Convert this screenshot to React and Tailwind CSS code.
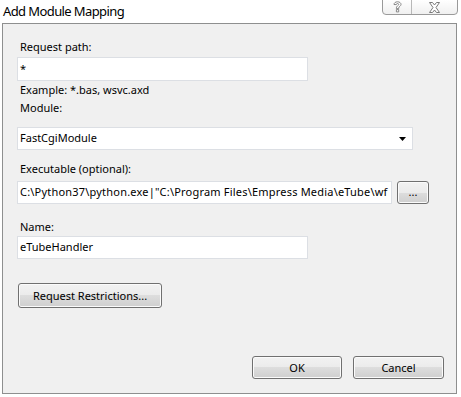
import React from "react";

const btn =
  "h-[23px] rounded-[3px] border border-[#707070] bg-[linear-gradient(#f2f2f2_0%,#ebebeb_50%,#dddddd_50%,#cfcfcf_100%)] shadow-[inset_0_0_0_1px_#fbfbfb] text-[11px] text-black leading-none";

const field =
  "h-[23px] bg-white border border-[#dcdfe4] px-[2px] text-[11px] text-black flex items-center overflow-hidden whitespace-nowrap";

const Label = ({ children }) => (
  <div className="ml-[3px] h-[16px] leading-[16px] text-[11px] text-black">
    {children}
  </div>
);

const App = () => {
  return (
    <div className="w-[461px] h-[397px] bg-white overflow-hidden font-['Noto_Sans',sans-serif]">
      {/* Title bar */}
      <div className="h-[23px] flex items-start justify-between">
        <div className="pl-[3px] pt-[2px] text-[13px] tracking-[-0.6px] leading-[18px] text-black">
          Add Module Mapping
        </div>
        <div className="mr-[3px] flex h-[16px] -mt-[1px] border border-[#9a9a9a] rounded-b-[4px] bg-[linear-gradient(#ffffff,#f0f0f0)]">
          <div className="w-[29px] flex items-center justify-center border-r border-[#b8b8b8]">
            <svg width="9" height="12" viewBox="0 0 9 12">
              <path
                d="M1 3.5C1 1.8 2.6 0.8 4.5 0.8S8 1.8 8 3.4c0 1.7-2.3 2.1-2.3 3.6v0.6H3.4V6.8c0-1.8 2.3-2.2 2.3-3.3 0-0.6-0.5-1-1.2-1-0.8 0-1.2 0.5-1.2 1.1z M3.4 8.6h2.3v2.3H3.4z"
                fill="#fff"
                stroke="#7a7a7a"
                strokeWidth="0.9"
              />
            </svg>
          </div>
          <div className="w-[45px] flex items-center justify-center">
            <svg width="13" height="11" viewBox="0 0 13 11">
              <path
                d="M1.5 0.5h3l2 2.5 2-2.5h3l-3.5 5 3.5 5h-3l-2-2.5-2 2.5h-3l3.5-5z"
                fill="#fff"
                stroke="#7a7a7a"
                strokeWidth="1"
              />
            </svg>
          </div>
        </div>
      </div>

      {/* Dialog body */}
      <div className="ml-[2px] w-[455px] h-[371px] border border-[#8e8f8f] bg-[#f0f0f0] pl-[14px] flex flex-col">
        <div className="mt-[15px]">
          <Label>Request path:</Label>
        </div>
        <div className={`${field} mt-[2px] w-[291px] h-[24px]`}>*</div>
        <div className="mt-[1px]">
          <Label>Example: *.bas, wsvc.axd</Label>
        </div>
        <div className="mt-[2px]">
          <Label>Module:</Label>
        </div>
        <div className={`${field} mt-[11px] w-[396px] justify-between`}>
          <span>FastCgiModule</span>
          <svg width="7" height="4" viewBox="0 0 7 4" className="mr-[4px]">
            <path d="M0 0h7L3.5 4z" fill="#000" />
          </svg>
        </div>
        <div className="mt-[11px]">
          <Label>Executable (optional):</Label>
        </div>
        <div className="mt-[4px] flex items-center gap-[5px]">
          <div className={`${field} w-[375px] px-[1px] tracking-[0.2px]`}>
            <span>C:\Python37\python.exe|"C:\Program Files\Empress Media\eTube\wf</span>
          </div>
          <button className={`${btn} w-[32px] pb-[2px] text-[10px]`}>...</button>
        </div>
        <div className="mt-[15px]">
          <Label>Name:</Label>
        </div>
        <div className={`${field} mt-[1px] w-[291px]`}>eTubeHandler</div>
        <div className="mt-[23px] ml-[1px]">
          <button className={`${btn} w-[144px] h-[25px]`}>
            Request Restrictions...
          </button>
        </div>
        <div className="mt-[48px] pr-[12px] flex justify-end gap-[11px]">
          <button
            className={`${btn} w-[90px] border-[#3c7fb1] shadow-[inset_0_0_0_1px_#c6e4f7]`}
          >
            OK
          </button>
          <button className={`${btn} w-[91px]`}>Cancel</button>
        </div>
      </div>
    </div>
  );
};

export default App;
